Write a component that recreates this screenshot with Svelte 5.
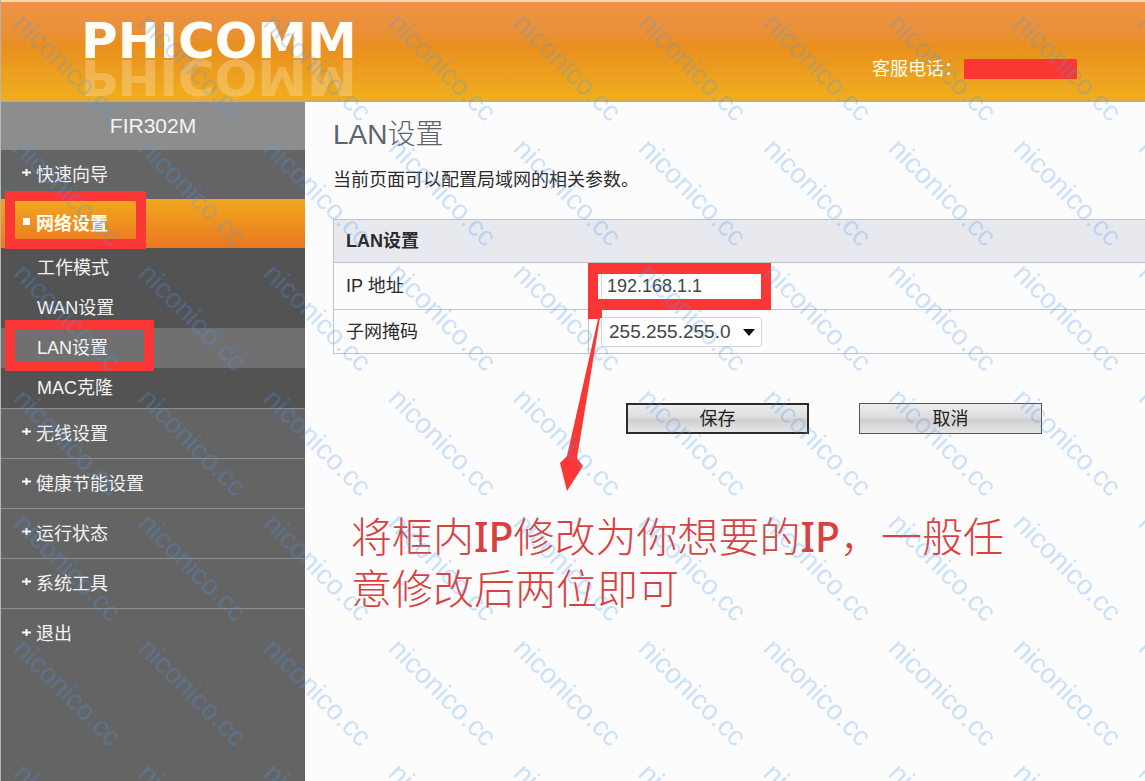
<script>
  const menu = [
    { label: '快速向导' },
    {
      label: '网络设置',
      active: true,
      children: [
        { label: '工作模式' },
        { label: 'WAN设置' },
        { label: 'LAN设置', current: true },
        { label: 'MAC克隆' }
      ]
    },
    { label: '无线设置' },
    { label: '健康节能设置' },
    { label: '运行状态' },
    { label: '系统工具' },
    { label: '退出' }
  ];

  const masks = ['255.255.255.0', '255.255.0.0', '255.0.0.0'];

  let ip = $state('192.168.1.1');
  let mask = $state(masks[0]);

  function reset() {
    ip = '192.168.1.1';
    mask = masks[0];
  }
</script>

<div class="page">
  <header>
    <div class="logo">
      <span class="word">PHICOMM</span>
      <span class="word mirror" aria-hidden="true">PHICOMM</span>
    </div>
    <div class="phone">客服电话：<span class="redacted"></span></div>
  </header>

  <div class="body">
    <aside>
      <div class="model">FIR302M</div>
      <nav>
        {#each menu as item}
          <a href="#top" class="item" class:active={item.active}>
            <svg class="bullet" viewBox="0 0 9 9" aria-hidden="true">
              {#if item.active}
                <rect x="1" y="1" width="7" height="7" fill="#fff" />
              {:else}
                <path d="M4.5 1v7M0 4.5h9" stroke="#fff" stroke-width="2" />
              {/if}
            </svg>
            {item.label}
            {#if item.active}<span class="mark mark-item"></span>{/if}
          </a>
          {#if item.children}
            <div class="sub">
              {#each item.children as child}
                <a href="#top" class="child" class:current={child.current}>
                  {child.label}
                  {#if child.current}<span class="mark mark-child"></span>{/if}
                </a>
              {/each}
            </div>
          {/if}
        {/each}
      </nav>
    </aside>

    <main>
      <h1>LAN设置</h1>
      <p class="intro">当前页面可以配置局域网的相关参数。</p>

      <form onsubmit={(e) => e.preventDefault()}>
        <table>
          <thead>
            <tr><th colspan="2">LAN设置</th></tr>
          </thead>
          <tbody>
            <tr class="row-ip">
              <td class="name"><label for="ip">IP 地址</label></td>
              <td class="value">
                <input id="ip" type="text" bind:value={ip} />
                <span class="mark mark-input"></span>
                <svg class="arrow" viewBox="0 0 48 186" aria-hidden="true">
                  <path d="M28 0h14v9h-2L17 149l6 8-16 25-7-28 7-7L38 10H28z" fill="#fb3735" />
                </svg>
              </td>
            </tr>
            <tr class="row-mask">
              <td class="name"><label for="mask">子网掩码</label></td>
              <td class="value">
                <div class="select">
                  <select id="mask" bind:value={mask}>
                    {#each masks as m}
                      <option>{m}</option>
                    {/each}
                  </select>
                  <svg class="caret" viewBox="0 0 12 7" aria-hidden="true">
                    <path d="M0 0h12L6 7z" fill="#111" />
                  </svg>
                </div>
              </td>
            </tr>
          </tbody>
        </table>

        <div class="buttons">
          <button type="submit" class="primary">保存</button>
          <button type="button" onclick={reset}>取消</button>
        </div>
      </form>

      <p class="note">将框内<b>IP</b>修改为你想要的<b>IP</b>，一般任意修改后两位即可</p>
    </main>
  </div>

  <svg class="watermark" aria-hidden="true">
    <defs>
      <pattern id="wm" width="125" height="125" patternUnits="userSpaceOnUse">
        <text transform="translate(11 25) rotate(45)">niconico.cc</text>
      </pattern>
    </defs>
    <rect width="100%" height="100%" fill="url(#wm)" />
  </svg>
</div>

<style>
  :global(body) {
    margin: 0;
    background: #fcfcfc;
  }

  .page {
    position: relative;
    display: flex;
    flex-direction: column;
    min-height: 100vh;
    overflow: hidden;
    box-sizing: border-box;
    border-left: 1px solid #b9b4ae;
    font-family: 'Liberation Sans', 'Noto Sans CJK SC', sans-serif;
    font-size: 18px;
    color: #2b2b2b;
  }

  header {
    display: flex;
    justify-content: space-between;
    align-items: flex-start;
    height: 102px;
    box-sizing: border-box;
    padding: 0 68px 0 80px;
    overflow: hidden;
    border-top: 2px solid #f3d9b4;
    border-bottom: 2px solid #d9a65a;
    background: linear-gradient(#ee9345, #ea9038 30%, #e98f1e 45%, #f0ae1e);
  }

  .logo {
    display: flex;
    flex-direction: column;
    padding-top: 17px;
  }

  .word {
    height: 40px;
    font: bold 50px/44px 'DejaVu Sans', sans-serif;
    color: #fffdf6;
  }

  .mirror {
    transform: scaleY(-1);
    color: rgba(255, 240, 215, 0.3);
  }

  .phone {
    display: flex;
    align-items: center;
    padding-top: 54px;
    line-height: 26px;
    color: #fffbe8;
  }

  .redacted {
    width: 113px;
    height: 20px;
    margin-left: 2px;
    background: #fb3735;
  }

  .body {
    display: flex;
    flex: 1;
  }

  aside {
    flex: 0 0 304px;
    background: #646464;
  }

  .model {
    height: 48px;
    line-height: 48px;
    background: #8d8d8d;
    color: #f4f4f4;
    font-size: 21px;
    text-align: center;
  }

  .item,
  .child {
    position: relative;
    display: flex;
    align-items: center;
    box-sizing: border-box;
    padding-bottom: 4px;
    color: #f4f4f4;
    text-decoration: none;
  }

  .item {
    height: 50px;
    padding-left: 21px;
    gap: 5px;
    border-bottom: 1px solid #8e8e8e;
  }

  .item:first-child {
    height: 49px;
    border-bottom: 0;
  }

  .item:last-child {
    border-bottom: 0;
  }

  .item.active {
    height: 49px;
    border-bottom: 0;
    background: linear-gradient(#f2a81f, #ea7720);
    color: #fffdf0;
    font-weight: bold;
  }

  .bullet {
    width: 9px;
    height: 9px;
  }

  .sub {
    background: #535353;
    border-bottom: 1px solid #8e8e8e;
  }

  .child {
    height: 40px;
    padding-left: 36px;
  }

  .child.current {
    background: #707070;
  }

  /* red highlight frames */
  .mark {
    position: absolute;
    z-index: 1;
    box-sizing: border-box;
    border: 10px solid #fb3735;
    pointer-events: none;
  }

  .mark-item {
    inset: -8px auto -1px 4px;
    width: 141px;
  }

  .mark-child {
    inset: -8px auto -3px 4px;
    width: 149px;
  }

  .mark-input {
    inset: 0 auto -1px -1px;
    width: 183px;
    border-width: 11px 10px;
  }

  main {
    flex: 1;
    min-width: 0;
    padding: 13px 0 0 28px;
  }

  h1 {
    margin: 0;
    font-size: 28px;
    font-weight: 300;
    line-height: 40px;
    color: #5d6470;
  }

  .intro {
    margin: 12px 0 26px;
    line-height: 26px;
  }

  table {
    width: 100%;
    border-collapse: collapse;
    border: 1px solid #c0c3ca;
    border-right: 0;
  }

  th {
    height: 38px;
    padding: 0 12px 4px;
    background: #e8e9ee;
    text-align: left;
  }

  td {
    position: relative;
    padding: 0 12px;
    border: 1px solid #c0c3ca;
    border-right: 0;
  }

  .row-ip td {
    height: 46px;
  }

  .row-mask td {
    height: 43px;
  }

  .name {
    width: 230px;
  }

  .name label {
    display: block;
    padding-bottom: 4px;
  }

  input,
  select {
    display: block;
    box-sizing: border-box;
    width: 161px;
    height: 30px;
    margin: 0;
    border: 1px solid #d6d6d6;
    background: #fff;
    color: #444;
    font-family: inherit;
    font-size: 18px;
  }

  input {
    padding: 0 5px;
  }

  select {
    padding: 0 7px;
    border-radius: 3px;
    font-size: 19px;
    appearance: none;
  }

  .select {
    position: relative;
    width: 161px;
  }

  .caret {
    position: absolute;
    top: 12px;
    right: 7px;
    width: 12px;
    height: 7px;
    pointer-events: none;
  }

  .arrow {
    position: absolute;
    z-index: 1;
    top: 46px;
    left: -29px;
    width: 48px;
    height: 186px;
    pointer-events: none;
  }

  .buttons {
    display: flex;
    gap: 50px;
    padding: 49px 0 0 293px;
  }

  button {
    width: 183px;
    height: 31px;
    padding: 0;
    border: 1px solid #555;
    border-radius: 0;
    background: linear-gradient(#ececec, #dedede 45%, #cfcfcf 55%, #e6e6e6);
    color: #222;
    font-family: inherit;
    font-size: 18px;
    line-height: 26px;
  }

  .primary {
    border: 2px solid #2b2b2b;
  }

  .note {
    max-width: 660px;
    margin: 76px 0 0 18px;
    font-size: 41px;
    font-weight: 300;
    line-height: 52px;
    color: #d8413f;
  }

  .note b {
    font-family: 'Noto Sans', sans-serif;
    font-weight: 500;
  }

  .watermark {
    position: absolute;
    z-index: 2;
    inset: 0;
    width: 100%;
    height: 100%;
    pointer-events: none;
  }

  .watermark text {
    font: 28px 'Liberation Sans', sans-serif;
    fill: rgba(70, 150, 240, 0.27);
  }
</style>
